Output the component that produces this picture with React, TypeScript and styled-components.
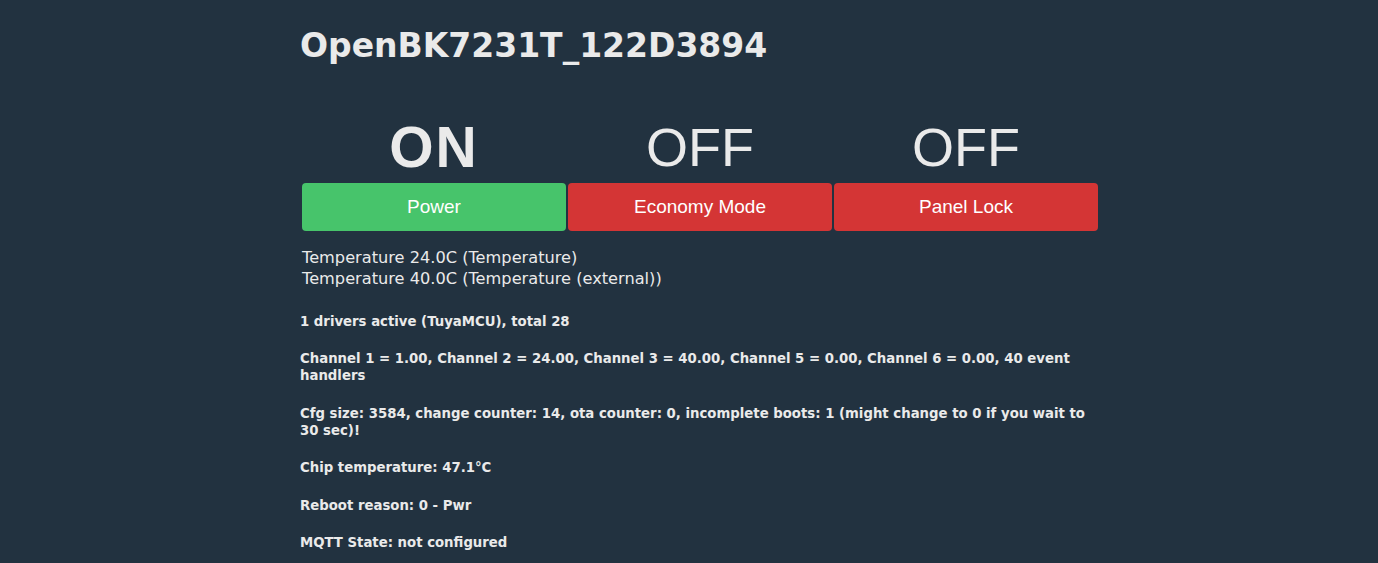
import styled, { createGlobalStyle } from "styled-components";

const GlobalStyle = createGlobalStyle`
    html, body {
        margin: 0;
        padding: 0;
        background: #223240;
    }
    body {
        font-family: 'DejaVu Sans', Verdana, sans-serif;
        color: #eaeaea;
    }
`

interface ToggleProps {
    $on: boolean;
}

const toggles = [
    {label: "Power", on: true},
    {label: "Economy Mode", on: false},
    {label: "Panel Lock", on: false},
]

const infoLines = [
    "1 drivers active (TuyaMCU), total 28",
    "Channel 1 = 1.00, Channel 2 = 24.00, Channel 3 = 40.00, Channel 5 = 0.00, Channel 6 = 0.00, 40 event handlers",
    "Cfg size: 3584, change counter: 14, ota counter: 0, incomplete boots: 1 (might change to 0 if you wait to 30 sec)!",
    "Chip temperature: 47.1°C",
    "Reboot reason: 0 - Pwr",
    "MQTT State: not configured",
]

export default function App() {
    return (
        <>
            <GlobalStyle/>
            <Page>
                <Title>OpenBK7231T_122D3894</Title>
                <ToggleGrid>
                    {toggles.map(t => (
                        <ToggleCell key={t.label}>
                            <StateText $on={t.on}>{t.on ? "ON" : "OFF"}</StateText>
                            <ToggleButton $on={t.on}>{t.label}</ToggleButton>
                        </ToggleCell>
                    ))}
                </ToggleGrid>
                <Readings>
                    <Reading>Temperature 24.0C (Temperature)</Reading>
                    <Reading>Temperature 40.0C (Temperature (external))</Reading>
                </Readings>
                {infoLines.map(line => (
                    <Info key={line}>{line}</Info>
                ))}
            </Page>
        </>
    )
}

const Page = styled.div`
    width: 822px;
    margin: 0 auto;
    padding: 26px 0 0 22px;
    box-sizing: border-box;
`

const Title = styled.h1`
    margin: 0;
    font-size: 33px;
    font-weight: bold;
    color: #eaeaea;
`

const ToggleGrid = styled.div`
    display: grid;
    grid-template-columns: repeat(3, 1fr);
    gap: 2px;
    padding: 0 2px;
    margin-top: 49px;
`

const ToggleCell = styled.div`
    display: flex;
    flex-direction: column;
    align-items: center;
`

const StateText = styled.div<ToggleProps>`
    font-family: 'Liberation Sans', Arial, sans-serif;
    font-size: ${props => props.$on ? "57px" : "54px"};
    font-weight: ${props => props.$on ? "bold" : "normal"};
    letter-spacing: ${props => props.$on ? "2px" : "0"};
    line-height: 66px;
    margin-bottom: 3px;
    color: #eaeaea;
`

const ToggleButton = styled.button<ToggleProps>`
    width: 100%;
    height: 48px;
    border: none;
    border-radius: 4px;
    background: ${props => props.$on ? "#47c46b" : "#d43535"};
    color: #ffffff;
    font-family: 'Liberation Sans', Arial, sans-serif;
    font-size: 19px;
    cursor: pointer;
`

const Readings = styled.div`
    display: flex;
    flex-direction: column;
    margin-top: 16px;
    padding: 0 0 3px 2px;
`

const Reading = styled.div`
    font-size: 16.2px;
    line-height: 21px;
    color: #eaeaea;
`

const Info = styled.h5`
    margin: 20.5px 0;
    font-size: 13.28px;
    line-height: 17px;
    font-weight: bold;
    color: #eaeaea;
`
